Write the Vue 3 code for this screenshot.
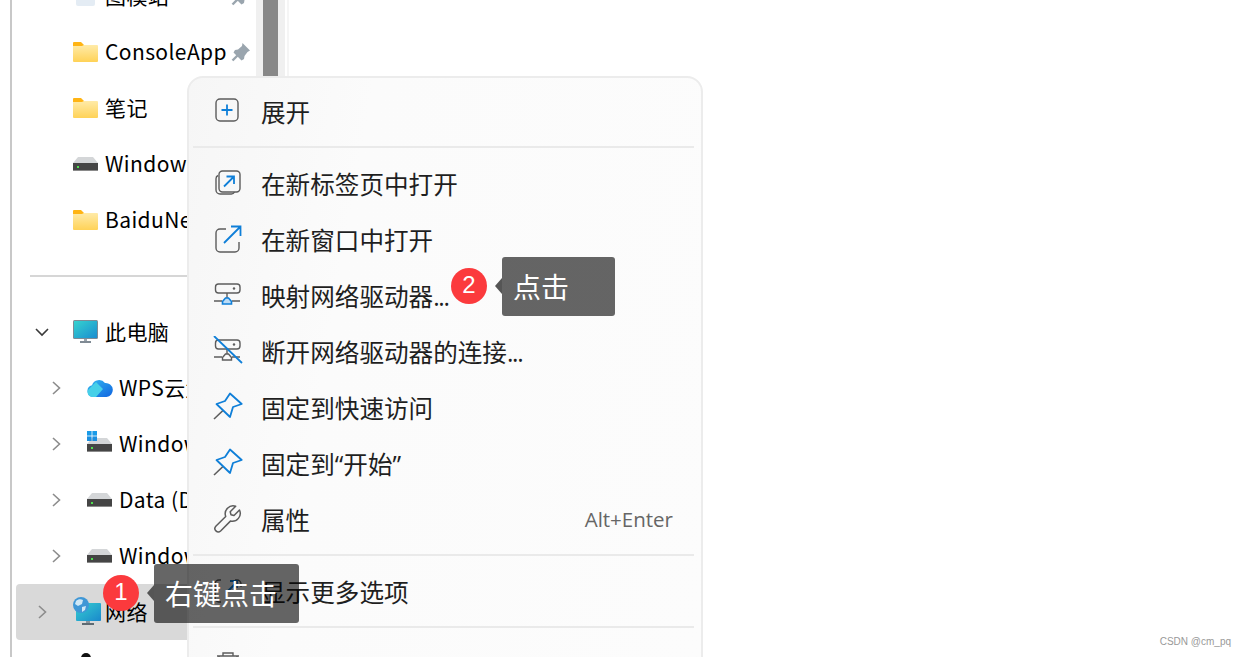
<script setup>
const sideTop = [
  { kind: 'pc', text: '图模站', pin: true },
  { kind: 'folder', text: 'ConsoleApp', pin: true },
  { kind: 'folder', text: '笔记' },
  { kind: 'drive', text: 'Windows (C:)' },
  { kind: 'folder', text: 'BaiduNetdiskDownload' },
]
const sideTree = [
  { kind: 'monitor', text: '此电脑', arrow: 'down', level: 0 },
  { kind: 'cloud', text: 'WPS云盘', arrow: 'right', level: 1 },
  { kind: 'windrive', text: 'Windows (C:)', arrow: 'right', level: 1 },
  { kind: 'drive', text: 'Data (D:)', arrow: 'right', level: 1 },
  { kind: 'drive', text: 'Windows (E:)', arrow: 'right', level: 1 },
  { kind: 'network', text: '网络', arrow: 'right', level: 0, active: true },
]
const group1 = [
  { icon: 'newtab', text: '在新标签页中打开' },
  { icon: 'newwin', text: '在新窗口中打开' },
  { icon: 'map', text: '映射网络驱动器', dots: '...' },
  { icon: 'unmap', text: '断开网络驱动器的连接', dots: '...' },
  { icon: 'pin', text: '固定到快速访问' },
  { icon: 'pin', text: '固定到“开始”' },
  { icon: 'wrench', text: '属性', hint: 'Alt+Enter' },
]
</script>

<template>
  <div class="page">
    <aside class="side">
      <div class="side-panel">
        <div class="rows">
          <div v-for="r in sideTop" :key="r.text" class="row">
            <span class="ic">
              <svg v-if="r.kind === 'folder'" width="25" height="20" viewBox="0 0 25 20"><path d="M0 1a1 1 0 0 1 1-1h7l3 3v2H0z" fill="#ffb414"/><path d="M0 4h9l2-1h13a1 1 0 0 1 1 1v15a1 1 0 0 1-1 1H1a1 1 0 0 1-1-1z" fill="url(#fold)"/><defs><linearGradient id="fold" x1="0" y1="0" x2="0" y2="1"><stop offset="0" stop-color="#ffeba8"/><stop offset="1" stop-color="#ffd257"/></linearGradient></defs></svg>
              <svg v-else-if="r.kind === 'drive'" width="25" height="14" viewBox="0 0 25 14"><path d="M5 0h15l5 6H0z" fill="#d4d6d8"/><path d="M0 6h25v8H0z" fill="#454545"/><path d="M0 13h25v1H0z" fill="#8a8a8a"/><rect x="4" y="9" width="2" height="2" fill="#4ee04e"/></svg>
              <svg v-else width="25" height="24" viewBox="0 0 25 24"><rect x="3" y="6" width="19" height="16" rx="2" fill="#e4ecf4"/><path d="M9 7v5M16 7v5M6 9h13" stroke="#2b8ad8" stroke-width="2"/></svg>
            </span>
            <span class="label">{{ r.text }}</span>
            <svg v-if="r.pin" class="pinned" width="20" height="20" viewBox="0 0 20 20"><path d="M11.500 1L19 8.500 16.500 10 13.500 14 13 17l-2.500 1.500-8-8L4 8l3-.5 4-3.500z" fill="#9aa5ae"/><path d="M1.500 18.500L7 13" stroke="#9aa5ae" stroke-width="2.400"/></svg>
          </div>
        </div>
        <div class="rule"></div>
        <div class="rows">
          <div v-for="r in sideTree" :key="r.text" class="row" :class="{ active: r.active, child: r.level === 1 }">
            <svg class="chev" width="14" height="14" viewBox="0 0 14 14">
              <path v-if="r.arrow === 'down'" d="M1 4l6 6 6-6" fill="none" stroke="#3a3a3a" stroke-width="1.600"/>
              <path v-else d="M4 1l6.500 6-6.500 6" fill="none" stroke="#8c8c8c" stroke-width="1.600"/>
            </svg>
            <span class="ic">
              <svg v-if="r.kind === 'monitor'" width="25" height="24" viewBox="0 0 25 24"><rect x="0" y="0" width="25" height="19" rx="1.500" fill="#7d8b96"/><rect x="1" y="1" width="23" height="17" fill="url(#mon)"/><rect x="11" y="19" width="3" height="3" fill="#9aa3ab"/><rect x="7" y="21" width="11" height="2" fill="#7f8a94"/><defs><linearGradient id="mon" x1="0" y1="0" x2="1" y2="1"><stop offset="0" stop-color="#35d2cf"/><stop offset="1" stop-color="#1a8dd0"/></linearGradient></defs></svg>
              <svg v-else-if="r.kind === 'cloud'" width="26" height="20" viewBox="0 0 26 20"><path d="M6 19a6 6 0 0 1-1-11.800A7.500 7.500 0 0 1 18 5a6.800 6.800 0 0 1 1.500 14z" fill="url(#cld)"/><path d="M1 12l8-8 7 7-7 8H6a5 5 0 0 1-5-7z" fill="#46d0e8"/><defs><linearGradient id="cld" x1="0" y1="0" x2="1" y2="1"><stop offset="0" stop-color="#32b8f0"/><stop offset="1" stop-color="#1064e0"/></linearGradient></defs></svg>
              <svg v-else-if="r.kind === 'windrive'" class="tall" width="25" height="21" viewBox="0 0 25 21"><path d="M5 7h15l5 6H0z" fill="#d4d6d8"/><path d="M0 13h25v8H0z" fill="#454545"/><path d="M0 20h25v1H0z" fill="#8a8a8a"/><rect x="4" y="16" width="2" height="2" fill="#4ee04e"/><rect y="0" width="4.600" height="4.600" fill="#1a9be8"/><rect x="5.400" y="0" width="4.600" height="4.600" fill="#1a9be8"/><rect y="5.400" width="4.600" height="4.600" fill="#1a8fe0"/><rect x="5.400" y="5.400" width="4.600" height="4.600" fill="#1a8fe0"/></svg>
              <svg v-else-if="r.kind === 'drive'" width="25" height="14" viewBox="0 0 25 14"><path d="M5 0h15l5 6H0z" fill="#d4d6d8"/><path d="M0 6h25v8H0z" fill="#454545"/><path d="M0 13h25v1H0z" fill="#8a8a8a"/><rect x="4" y="9" width="2" height="2" fill="#4ee04e"/></svg>
              <svg v-else width="28" height="28" viewBox="0 0 28 28"><rect x="3" y="6" width="25" height="18" rx="1" fill="url(#net)"/><rect x="13" y="24" width="4" height="2" fill="#8c959c"/><rect x="9" y="26" width="12" height="2" fill="#5e6a72"/><circle cx="8" cy="8" r="8" fill="#3f97d6"/><path d="M3 4c2-2 5-2 7-1l-1 4-4 2-3-2zM9 10l4-1-1 4-3 2z" fill="#cfe8f6"/><defs><linearGradient id="net" x1="0" y1="0" x2="1" y2="1"><stop offset="0" stop-color="#35cfd0"/><stop offset="1" stop-color="#1a88cc"/></linearGradient></defs></svg>
            </span>
            <span class="label">{{ r.text }}</span>
          </div>
          <div class="row person"><span class="dot"></span></div>
        </div>
      </div>
      <div class="scroll"><div class="thumb"></div></div>
    </aside>

    <div class="menu">
      <div class="item">
        <svg class="mi mi-plus" width="26" height="26" viewBox="0 0 26 26"><rect x="2" y="2" width="22" height="22" rx="4" fill="none" stroke="#5c5c5c" stroke-width="1.400"/><path d="M13 7.500v11M7.500 13h11" stroke="#0f7fd8" stroke-width="1.800"/></svg>
        <span>展开</span>
      </div>
      <div class="sep"></div>
      <div v-for="m in group1" :key="m.text" class="item">
        <svg class="mi" width="30" height="30" viewBox="0 0 30 30">
          <template v-if="m.icon === 'newtab'">
            <path d="M5 7.500a3.500 3.500 0 0 0-2 3.200V22a4 4 0 0 0 4 4h11.300a3.500 3.500 0 0 0 3.200-2" fill="none" stroke="#5c5c5c" stroke-width="1.400"/>
            <rect x="6" y="3" width="21" height="21" rx="3.500" fill="none" stroke="#5c5c5c" stroke-width="1.400"/>
            <path d="M11 18.500L20.500 9M13.500 8.500h7.500v7.500" fill="none" stroke="#0f7fd8" stroke-width="1.800"/>
          </template>
          <template v-else-if="m.icon === 'newwin'">
            <path d="M13 5H7a4 4 0 0 0-4 4v15a4 4 0 0 0 4 4h15a4 4 0 0 0 4-4v-6" fill="none" stroke="#5c5c5c" stroke-width="1.400"/>
            <path d="M11 19L27 3M18 2.500h9.500V12" fill="none" stroke="#0f7fd8" stroke-width="1.800"/>
          </template>
          <template v-else-if="m.icon === 'map'">
            <rect x="2.500" y="4" width="24.500" height="9" rx="3" fill="none" stroke="#5c5c5c" stroke-width="1.400"/>
            <circle cx="21" cy="8.500" r="1.200" fill="#5c5c5c"/>
            <path d="M14 13v5M1 21h8M19 21h8" stroke="#5c5c5c" stroke-width="1.400"/>
            <path d="M9.500 24v-2.500L12.500 18h3l3 3.500V24z" fill="#bcdcf6" stroke="#0f7fd8" stroke-width="1.600"/>
          </template>
          <template v-else-if="m.icon === 'unmap'">
            <rect x="2.500" y="4" width="24.500" height="9" rx="3" fill="none" stroke="#5c5c5c" stroke-width="1.400"/>
            <circle cx="21" cy="8.500" r="1.200" fill="#5c5c5c"/>
            <path d="M14 13v5M1 21h8M19 21h8M9.500 24v-2.500L12.500 18h3l3 3.500V24z" fill="none" stroke="#5c5c5c" stroke-width="1.400"/>
            <path d="M1 0l28 27" stroke="#0f7fd8" stroke-width="1.800"/>
          </template>
          <template v-else-if="m.icon === 'pin'">
            <path d="M1 27l9-8.500" stroke="#5c5c5c" stroke-width="1.600"/>
            <path d="M17 1.500L28.700 12 20 15l-3 10L3.500 12 12 9z" fill="none" stroke="#0f7fd8" stroke-width="1.800" stroke-linejoin="round"/>
          </template>
          <template v-else>
            <path d="M26.500 6l-5.500 5.500-3-.8-.8-3L22.700 2.200a8 8 0 0 0-10 10.300L2.800 22.200a3.400 3.400 0 0 0 4.800 4.800l9.800-9.900A8 8 0 0 0 26.500 6z" fill="none" stroke="#5c5c5c" stroke-width="1.500" stroke-linejoin="round"/>
          </template>
        </svg>
        <span>{{ m.text }}<span v-if="m.dots" class="dots">{{ m.dots }}</span></span>
        <span v-if="m.hint" class="hint">{{ m.hint }}</span>
      </div>
      <div class="sep"></div>
      <div class="item">
        <svg class="mi" width="30" height="30" viewBox="0 0 30 30"><path d="M8 4H6a4 4 0 0 0-4 4v14a4 4 0 0 0 4 4h2M22 4h2a4 4 0 0 1 4 4v3" fill="none" stroke="#5c5c5c" stroke-width="1.400"/><path d="M14 16L23 7M17 5h7v7" fill="none" stroke="#0f7fd8" stroke-width="1.800"/></svg>
        <span>显示更多选项</span>
      </div>
      <div class="sep"></div>
      <div class="item">
        <svg class="mi" width="30" height="30" viewBox="0 0 30 30"><path d="M4 8h22M10 8V5h10v3M6 8v18h18V8" fill="none" stroke="#5c5c5c" stroke-width="1.400"/></svg>
      </div>
    </div>

    <div class="tip tip-one"><span class="arrow"></span>右键点击</div>
    <div class="badge badge-one">1</div>
    <div class="tip tip-two"><span class="arrow"></span>点击</div>
    <div class="badge badge-two">2</div>
    <div class="mark">CSDN @cm_pq</div>
  </div>
</template>

<style>
html, body { margin: 0; background: #fff; }
</style>

<style scoped>
.page {
  position: relative;
  width: 1246px;
  height: 657px;
  overflow: hidden;
  background: #fff;
  font-family: "Noto Sans CJK SC", "Noto Sans", sans-serif;
  color: #000;
}
.side {
  display: flex;
  height: 100%;
  width: 289px;
  padding-left: 10px;
  box-sizing: border-box;
  border-right: 2px solid #f5f5f5;
}
.side-panel {
  width: 246px;
  flex: none;
  margin-top: -32px;
  border-left: 2px solid #c8c8c8;
  box-sizing: border-box;
  overflow: hidden;
}
.rows { display: flex; flex-direction: column; }
.row {
  height: 56px;
  flex: none;
  display: flex;
  align-items: center;
  padding-left: 18px;
  position: relative;
  box-sizing: border-box;
  white-space: nowrap;
  font-size: 21px;
  letter-spacing: 0.4px;
}
.chev { position: absolute; left: 23px; top: 21px; }
.child .chev { left: 37px; }
.child { padding-left: 32px; }
.row .ic { margin-left: 43px; }
.ic {
  width: 32px;
  flex: none;
  display: flex;
  align-items: center;
}
.ic .tall { margin-bottom: 5px; }
.label { flex: none; margin-top: -3px; }
.pinned { margin-left: auto; margin-right: 5px; flex: none; }
.rule {
  height: 2px;
  background: #d6d6d6;
  margin: 27px 0 27px 18px;
}
.active {
  background: #d9d9d9;
  border-radius: 4px;
  margin-left: 4px;
  padding-left: 14px;
}
.active .chev { left: 19px; }
.active .ic { margin-top: -2px; }
.person { padding: 0; }
.dot {
  width: 10px;
  height: 10px;
  background: #111;
  border-radius: 50%;
  position: absolute;
  left: 69px;
  top: 13px;
}
.scroll {
  flex: none;
  width: 29px;
  box-sizing: border-box;
  background: #f0f0f0;
  padding: 0 7px;
}
.thumb {
  height: 100%;
  background: #888;
}
.menu {
  position: absolute;
  left: 187px;
  top: 76px;
  width: 516px;
  height: 620px;
  box-sizing: border-box;
  padding: 5px 7px 5px 4px;
  background: linear-gradient(100deg, #f6f6f6 0%, #fbfbfb 30%, #fcfcfc 100%);
  border: 2px solid #ececec;
  border-radius: 16px;
  font-family: "Open Sans", "Noto Sans CJK SC", sans-serif;
  font-size: 24.6px;
  color: #1f1f1f;
}
.item {
  height: 56px;
  display: flex;
  align-items: center;
  position: relative;
  padding-left: 68px;
  white-space: nowrap;
}
.mi { position: absolute; left: 20px; top: 13px; }
.mi-plus { left: 21px; top: 14px; }
.dots { letter-spacing: -1.300px; }
.sep {
  height: 2px;
  background: #eaeaea;
  margin: 7px 0;
}
.hint {
  margin-left: auto;
  margin-right: 21px;
  font-size: 20.500px;
  color: #666;
}
.tip {
  position: absolute;
  background: rgba(0, 0, 0, 0.6);
  color: #fff;
  border-radius: 3px;
  box-sizing: border-box;
  height: 59px;
  line-height: 59px;
  padding-left: 11px;
  font-size: 28px;
  white-space: nowrap;
}
.tip-one { left: 154px; top: 564px; width: 145px; }
.tip-two { left: 502px; top: 257px; width: 113px; }
.arrow {
  position: absolute;
  left: -7px;
  top: 21px;
  border-style: solid;
  border-width: 8px 7px 8px 0;
  border-color: transparent #555 transparent transparent;
}
.badge {
  position: absolute;
  width: 36px;
  height: 36px;
  border-radius: 50%;
  background: #fb3a3d;
  color: #fff;
  text-align: center;
  line-height: 34px;
  font-family: "Liberation Sans", sans-serif;
  font-size: 24px;
}
.badge-one { left: 103px; top: 575px; }
.badge-two { left: 451px; top: 268px; }
.mark {
  position: absolute;
  right: 15px;
  top: 636px;
  font-family: "Liberation Sans", sans-serif;
  font-size: 10px;
  color: #999;
}
</style>
